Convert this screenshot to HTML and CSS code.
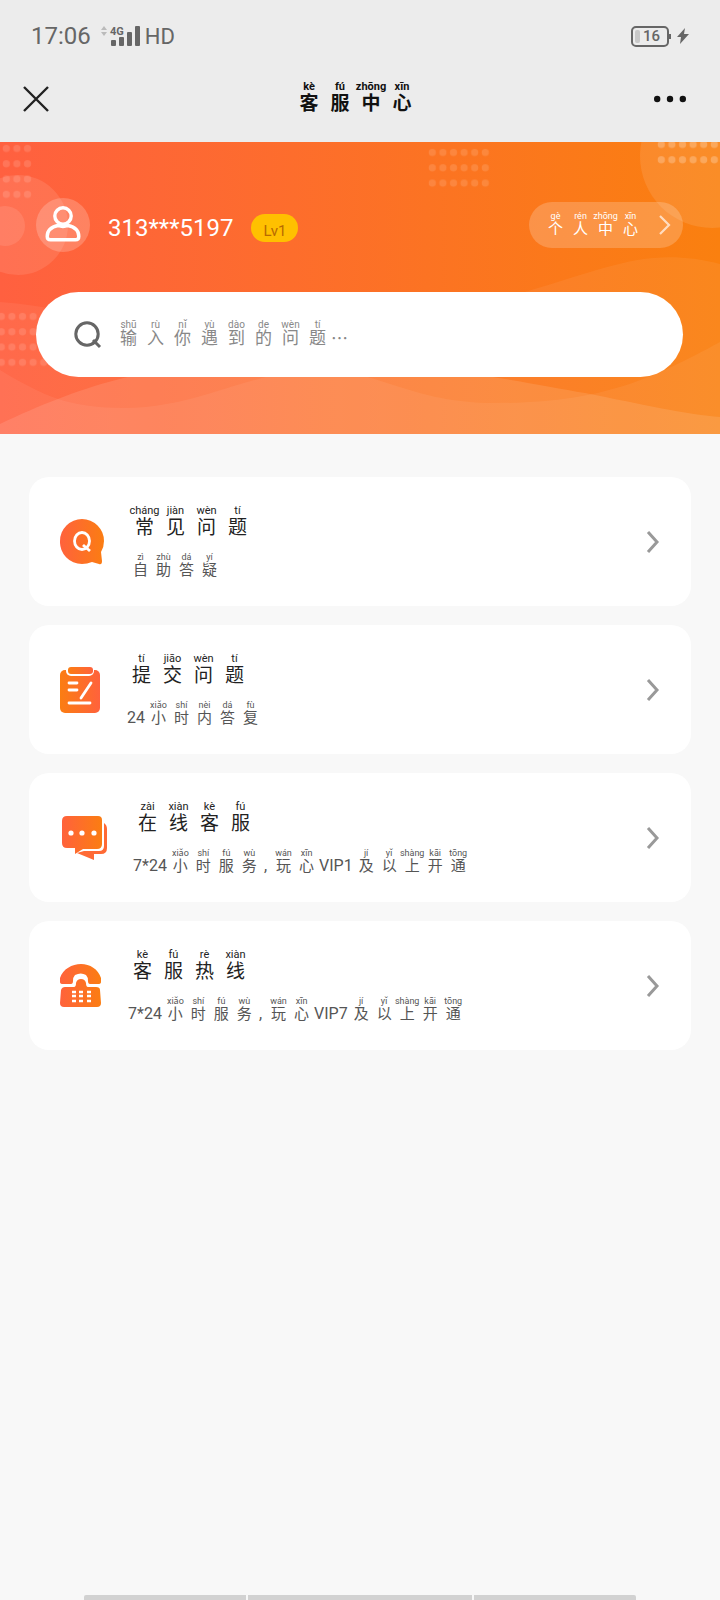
FILE: index.html
```
<!DOCTYPE html>
<html lang="zh-CN">
<head>
    <meta charset="UTF-8">
    <meta name="viewport" content="width=device-width, initial-scale=1.0">
    <title>客服中心</title>
    <link rel="stylesheet" href="styles.css">
</head>
<body>
    <header class="top">
        <div class="status">
            <span class="clock">17:06</span>
            <svg class="signal" width="40" height="24" viewBox="0 0 40 24" aria-hidden="true">
                <path d="M0 6l3-4 3 4zM0 8h6l-3 4z" fill="#bbb"/>
                <g fill="#666">
                    <rect x="10" y="16" width="5" height="6" rx="1"/>
                    <rect x="18" y="13" width="5" height="9" rx="1"/>
                    <rect x="26" y="8" width="5" height="14" rx="1"/>
                    <rect x="34" y="2" width="5" height="20" rx="1"/>
                    <text x="9" y="11" class="net">4G</text>
                </g>
            </svg>
            <span class="hd">HD</span>
            <span class="battery">16</span>
            <svg width="12" height="16" viewBox="0 0 12 16" aria-hidden="true">
                <path d="M8 0L0 9h4l-1 7 9-10H7z" fill="#666"/>
            </svg>
        </div>
        <nav class="nav">
            <button class="icon-btn" aria-label="关闭">
                <svg width="26" height="26" viewBox="0 0 26 26"><path d="M1 1l24 24M25 1L1 25" stroke="#222" stroke-width="2.400"/></svg>
            </button>
            <h1 class="nav-title py">
                <ruby>客<rt>kè</rt></ruby><ruby>服<rt>fú</rt></ruby><ruby>中<rt>zhōng</rt></ruby><ruby>心<rt>xīn</rt></ruby>
            </h1>
            <button class="icon-btn" aria-label="更多">
                <svg width="32" height="8" viewBox="0 0 32 8" fill="#111"><circle cx="3.200" cy="4" r="3.200"/><circle cx="16" cy="4" r="3.200"/><circle cx="28.800" cy="4" r="3.200"/></svg>
            </button>
        </nav>
    </header>

    <section class="hero">
        <svg class="hero-bg" viewBox="0 0 720 292" preserveAspectRatio="none" aria-hidden="true">
            <defs>
                <pattern id="dots" width="10.6" height="15.3" patternUnits="userSpaceOnUse">
                    <circle cx="5.3" cy="6.5" r="3.6" fill="#fff"/>
                </pattern>
            </defs>
            <g fill="#fff">
                <circle cx="18" cy="83" r="50" opacity=".1"/>
                <circle cx="5" cy="84" r="20" opacity=".1"/>
                <circle cx="712" cy="14" r="72" opacity=".1"/>
                <path d="M0 160C110 168 200 215 310 215S440 175 525 150S650 104 720 122V292H0z" opacity=".06"/>
                <path d="M0 228C45 255 70 266 125 266C200 266 250 228 320 228C380 228 410 261 495 261C600 261 650 238 720 200V292H0z" opacity=".06"/>
                <path d="M0 282C90 240 160 218 300 218C420 218 520 240 585 251C640 262 690 273 720 275V292H0z" opacity=".11"/>
            </g>
            <rect width="32" height="61" transform="translate(1 0)" fill="url(#dots)" opacity=".13"/>
            <rect width="53" height="61" transform="translate(-4 168)" fill="url(#dots)" opacity=".13"/>
            <rect width="64" height="46" transform="translate(427 4)" fill="url(#dots)" opacity=".13"/>
            <rect width="64" height="31" transform="translate(656 -4)" fill="url(#dots)" opacity=".24"/>
        </svg>
        <div class="user">
            <span class="avatar">
                <svg width="36" height="36" viewBox="0 0 36 36" fill="none" stroke="#fff" stroke-width="3.4">
                    <circle cx="18" cy="10" r="8.2"/>
                    <path d="M13 19.500C6 21 2.200 25 2.200 30.500Q2.200 33.800 5.500 33.800H30.500Q33.800 33.800 33.800 30.500C33.800 25 30 21 23 19.500Q18 21.500 13 19.500z"/>
                </svg>
            </span>
            <span class="uid">313***5197</span>
            <span class="level">Lv1</span>
            <a class="profile" href="#profile">
                <span class="py"><ruby>个<rt>gè</rt></ruby><ruby>人<rt>rén</rt></ruby><ruby>中<rt>zhōng</rt></ruby><ruby>心<rt>xīn</rt></ruby></span>
                <svg width="12" height="20" viewBox="0 0 12 20"><path d="M1 1l9 9-9 9" fill="none" stroke="#ffdcc0" stroke-width="2.200"/></svg>
            </a>
        </div>
        <div class="search">
            <svg width="28" height="28" viewBox="0 0 28 28" fill="none" stroke="#666" stroke-width="3"><circle cx="13" cy="13" r="11.200"/><path d="M19 19l7 7"/></svg>
            <div class="search-field">
                <input id="q" type="text">
                <label class="py" for="q">
                    <ruby>输<rt>shū</rt></ruby><ruby>入<rt>rù</rt></ruby><ruby>你<rt>nǐ</rt></ruby><ruby>遇<rt>yù</rt></ruby><ruby>到<rt>dào</rt></ruby><ruby>的<rt>de</rt></ruby><ruby>问<rt>wèn</rt></ruby><ruby>题<rt>tí</rt></ruby><span class="more">…</span>
                </label>
            </div>
        </div>
    </section>

    <svg class="defs" width="0" height="0" aria-hidden="true">
        <linearGradient id="lr"><stop offset="0" stop-color="#ff623c"/><stop offset="1" stop-color="#fb7d12"/></linearGradient>
        <linearGradient id="rl"><stop offset="0" stop-color="#fb7d12"/><stop offset="1" stop-color="#ff623c"/></linearGradient>
    </svg>

    <main class="list">
        <a class="card" href="#faq">
            <svg width="44" height="46" viewBox="0 0 44 46">
                <path d="M22 0A22 22 0 0 1 44 22Q44 28 41 33L42 42Q42 46 39 45L32 43Q27 45 22 45A22 22 0 0 1 0 22A22 22 0 0 1 22 0z" fill="url(#lr)"/>
                <ellipse cx="22" cy="22" rx="7.500" ry="8.500" fill="none" stroke="#fff" stroke-width="2.800"/>
                <path d="M23 26l7 6" stroke="#fff" stroke-width="2.800"/>
            </svg>
            <div class="card-text">
                <h2 class="py"><ruby>常<rt>cháng</rt></ruby><ruby>见<rt>jiàn</rt></ruby><ruby>问<rt>wèn</rt></ruby><ruby>题<rt>tí</rt></ruby></h2>
                <p class="py"><ruby>自<rt>zì</rt></ruby><ruby>助<rt>zhù</rt></ruby><ruby>答<rt>dá</rt></ruby><ruby>疑<rt>yí</rt></ruby></p>
            </div>
            <svg class="arrow" width="14" height="22" viewBox="0 0 14 22"><path d="M2 1l9 10-9 10"/></svg>
        </a>
        <a class="card" href="#submit">
            <svg width="41" height="46" viewBox="0 0 41 46">
                <rect y="3" width="40" height="43" rx="5" fill="url(#rl)"/>
                <rect x="6" y="-3" width="28" height="12" rx="5" fill="#fff"/>
                <rect x="8" y="0" width="25" height="7" rx="3" fill="url(#rl)"/>
                <g stroke="#fff" stroke-width="2.800" stroke-linecap="round">
                    <path d="M9 16h8M9 23h8M9 36h21M31 16L21 31"/>
                </g>
            </svg>
            <div class="card-text">
                <h2 class="py"><ruby>提<rt>tí</rt></ruby><ruby>交<rt>jiāo</rt></ruby><ruby>问<rt>wèn</rt></ruby><ruby>题<rt>tí</rt></ruby></h2>
                <p class="py"><span>24</span><ruby>小<rt>xiǎo</rt></ruby><ruby>时<rt>shí</rt></ruby><ruby>内<rt>nèi</rt></ruby><ruby>答<rt>dá</rt></ruby><ruby>复<rt>fù</rt></ruby></p>
            </div>
            <svg class="arrow" width="14" height="22" viewBox="0 0 14 22"><path d="M2 1l9 10-9 10"/></svg>
        </a>
        <a class="card" href="#chat">
            <svg width="47" height="44" viewBox="0 0 47 44">
                <path d="M44 7Q47 9 47 13V32Q47 38 41 38H34V44L17 37L24 35H39Q44 35 44 30z" fill="#ff6a35"/>
                <path d="M7 0H38Q42 0 42 4V28Q42 33 37 33H23L15 38V32H7Q2 32 2 27V5Q2 0 7 0z" fill="url(#lr)"/>
                <g fill="#fff"><circle cx="11" cy="17" r="2.600"/><circle cx="22" cy="17" r="2.600"/><circle cx="34" cy="17" r="2.600"/></g>
            </svg>
            <div class="card-text">
                <h2 class="py"><ruby>在<rt>zài</rt></ruby><ruby>线<rt>xiàn</rt></ruby><ruby>客<rt>kè</rt></ruby><ruby>服<rt>fú</rt></ruby></h2>
                <p class="py"><span>7*24</span><ruby>小<rt>xiǎo</rt></ruby><ruby>时<rt>shí</rt></ruby><ruby>服<rt>fú</rt></ruby><ruby>务<rt>wù</rt></ruby><span class="comma">,</span><ruby>玩<rt>wán</rt></ruby><ruby>心<rt>xīn</rt></ruby><span>VIP1</span><ruby>及<rt>jí</rt></ruby><ruby>以<rt>yǐ</rt></ruby><ruby>上<rt>shàng</rt></ruby><ruby>开<rt>kāi</rt></ruby><ruby>通<rt>tōng</rt></ruby></p>
            </div>
            <svg class="arrow" width="14" height="22" viewBox="0 0 14 22"><path d="M2 1l9 10-9 10"/></svg>
        </a>
        <a class="card" href="#hotline">
            <svg width="42" height="44" viewBox="0 0 42 44">
                <path d="M0 14C3 5 12 0 21 0S38 5 41 14V18Q41 20 38 20H30Q28 20 28 17Q28 13 26 11Q21 8 15 11Q13 13 13 17Q13 20 11 20H3Q0 20 0 18z" fill="url(#lr)"/>
                <path d="M5 23H14Q16 23 16 19Q17 15 21 15T26 19Q26 23 28 23H36Q40 23 40 26L41 39Q41 43 37 43H4Q0 43 0 39L1 26Q2 23 5 23z" fill="url(#lr)"/>
                <path d="M12 28h4M19 28h4M27 28h4M12 32h4M19 32h4M27 32h4M12 37h4M19 37h4M27 37h4" stroke="#fff" stroke-width="2.600"/>
            </svg>
            <div class="card-text">
                <h2 class="py"><ruby>客<rt>kè</rt></ruby><ruby>服<rt>fú</rt></ruby><ruby>热<rt>rè</rt></ruby><ruby>线<rt>xiàn</rt></ruby></h2>
                <p class="py"><span>7*24</span><ruby>小<rt>xiǎo</rt></ruby><ruby>时<rt>shí</rt></ruby><ruby>服<rt>fú</rt></ruby><ruby>务<rt>wù</rt></ruby><span class="comma">,</span><ruby>玩<rt>wán</rt></ruby><ruby>心<rt>xīn</rt></ruby><span>VIP7</span><ruby>及<rt>jí</rt></ruby><ruby>以<rt>yǐ</rt></ruby><ruby>上<rt>shàng</rt></ruby><ruby>开<rt>kāi</rt></ruby><ruby>通<rt>tōng</rt></ruby></p>
            </div>
            <svg class="arrow" width="14" height="22" viewBox="0 0 14 22"><path d="M2 1l9 10-9 10"/></svg>
        </a>
    </main>

    <div class="gesture-bar"><i></i><i class="mid"></i><i></i></div>
</body>
</html>
```
FILE: styles.css
```
* {
    box-sizing: border-box;
}
body {
    margin: 0;
    min-height: 100vh;
    display: flex;
    flex-direction: column;
    background: #f8f8f8;
    font-family: Roboto, "Noto Sans CJK SC", sans-serif;
}
h1, h2, p {
    margin: 0;
}
a {
    color: inherit;
    text-decoration: none;
}
svg {
    display: block;
    flex: none;
}
.defs {
    position: absolute;
}

/* characters with pinyin above, one fixed slot each */
.py {
    display: flex;
    align-items: flex-end;
    white-space: nowrap;
}
.py ruby {
    display: flex;
    flex-direction: column-reverse;
    align-items: center;
}
.py rt {
    display: block;
    font-size: 9px;
    line-height: 12px;
}

.top {
    background: #ececec;
    color: #666;
}
.status {
    height: 72px;
    padding: 0 31px;
    display: flex;
    align-items: center;
    font-size: 24px;
}
.signal {
    margin: 0 4px 0 10px;
}
.net {
    font-size: 11px;
    font-weight: 700;
}
.hd {
    font-size: 22px;
    margin-right: auto;
}
.battery {
    position: relative;
    width: 38px;
    height: 21px;
    margin-right: 8px;
    padding-left: 10px;
    border: 2px solid #666;
    border-radius: 5px;
    font-size: 15px;
    font-weight: 500;
    line-height: 17px;
}
.battery::before {
    content: "";
    position: absolute;
    left: 2px;
    top: 2px;
    width: 5px;
    height: 13px;
    border-radius: 2px;
    background: #c8c8c8;
}
.battery::after {
    content: "";
    position: absolute;
    right: -4px;
    top: 6px;
    width: 2px;
    height: 5px;
    background: #666;
}
.nav {
    height: 70px;
    padding: 0 34px 16px 23px;
    display: flex;
    align-items: center;
    justify-content: space-between;
}
.icon-btn {
    padding: 0;
    border: none;
    background: none;
    cursor: pointer;
}
.nav-title {
    padding: 0 0 4px 8px;
    color: #111;
    font-size: 19px;
    font-weight: 700;
    line-height: 20px;
}
.nav-title ruby, .card h2 ruby {
    width: 31px;
}
.nav-title rt, .card h2 rt {
    font-size: 11px;
    line-height: 14px;
}

.hero {
    position: relative;
    padding: 56px 37px 57px 36px;
    background: linear-gradient(90deg, #ff6040, #fa800f);
}
.hero-bg {
    position: absolute;
    inset: 0;
    width: 100%;
    height: 100%;
}
.user {
    position: relative;
    display: flex;
    align-items: center;
    color: #fff;
}
.avatar {
    width: 54px;
    height: 54px;
    padding: 8px 9px;
    border-radius: 50%;
    background: rgba(255, 255, 255, .2);
}
.uid {
    margin: 6px 18px 0;
    font-size: 24px;
    line-height: 28px;
}
.level {
    height: 28px;
    width: 47px;
    margin-top: 6px;
    padding-top: 6px;
    border-radius: 14px;
    background: #ffc000;
    color: #b86a00;
    font-size: 15px;
    line-height: 22px;
    text-align: center;
}
.profile {
    height: 46px;
    margin-left: auto;
    padding: 0 12px 0 14px;
    display: flex;
    align-items: center;
    border-radius: 23px;
    background: rgba(255, 255, 255, .2);
    font-size: 15px;
    line-height: 14px;
}
.profile .py {
    padding-bottom: 4px;
}
.profile ruby {
    width: 25px;
}
.profile svg {
    margin-left: 16px;
}
.search {
    position: relative;
    height: 85px;
    margin-top: 40px;
    padding: 0 38px;
    display: flex;
    align-items: center;
    border-radius: 43px;
    background: #fff;
}
.search-field {
    flex: 1;
    margin-left: 13px;
    display: grid;
    align-items: center;
}
.search-field input, .search-field label {
    grid-area: 1 / 1;
}
.search-field input {
    width: 100%;
    height: 48px;
    border: none;
    outline: none;
    background: none;
    font-size: 17px;
}
.search-field label {
    padding-bottom: 6px;
    color: #888;
    font-size: 17px;
    line-height: 14px;
    pointer-events: none;
}
.search-field input:focus + label {
    visibility: hidden;
}
.search-field ruby {
    width: 27px;
}
.search-field rt {
    font-size: 10px;
}
.more {
    font-family: "Noto Sans CJK SC", sans-serif;
}

.list {
    flex: 1;
    padding: 43px 29px;
    display: flex;
    flex-direction: column;
    gap: 19px;
}
.card {
    height: 129px;
    padding: 0 31px;
    display: flex;
    align-items: center;
    border-radius: 20px;
    background: #fff;
}
.card-text {
    margin: 0 auto 0 25px;
    padding-bottom: 2px;
}
.card h2 {
    color: #222;
    font-size: 19px;
    font-weight: 400;
    line-height: 20px;
}
.card p {
    margin-top: 13px;
    color: #555;
    font-size: 15px;
    line-height: 14px;
}
.card p ruby {
    width: 23px;
}
.card p span {
    padding: 0 2px 0 1px;
    font-size: 16px;
}
.card p .comma {
    padding: 0 5px 0 3px;
}
.arrow {
    fill: none;
    stroke: #999;
    stroke-width: 3;
}

.gesture-bar {
    display: flex;
    gap: 2px;
    height: 5px;
    margin: 0 84px;
    border-radius: 2px 2px 0 0;
    overflow: hidden;
}
.gesture-bar i {
    flex: 162;
    background: #d2d2d2;
}
.gesture-bar .mid {
    flex: 224;
}
```
